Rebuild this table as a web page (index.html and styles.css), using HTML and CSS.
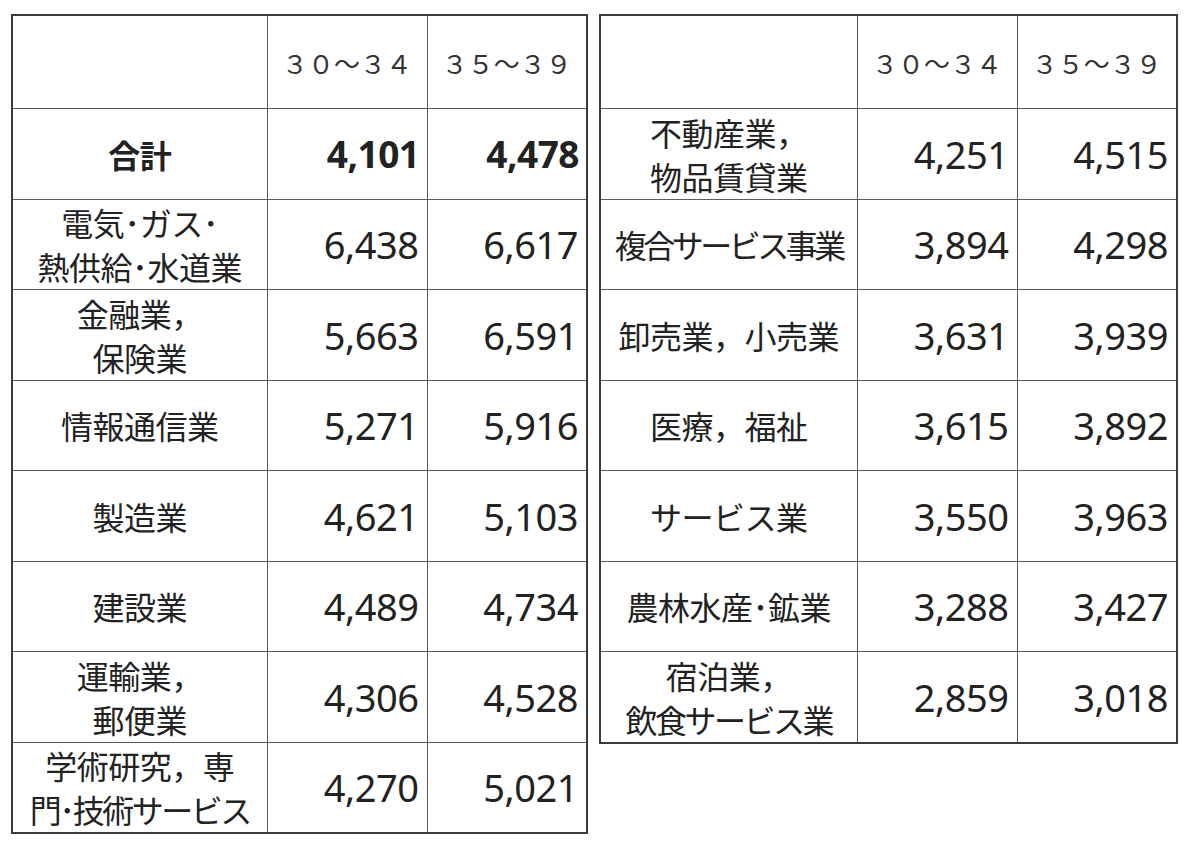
FILE: index.html
```html
<!DOCTYPE html>
<html lang="ja">
<head>
<meta charset="utf-8">
<title>年収表</title>
<link rel="stylesheet" href="styles.css">
</head>
<body>
<div class="wrap">
  <table class="tbl tbl-left">
    <colgroup><col class="c-lab-l"><col class="c-num"><col class="c-num"></colgroup>
    <tr class="head"><th></th><th>３０～３４</th><th>３５～３９</th></tr>
    <tr class="total"><td class="lab">合計</td><td class="num">4,101</td><td class="num">4,478</td></tr>
    <tr><td class="lab">電気･ガス･<br>熱供給･水道業</td><td class="num">6,438</td><td class="num">6,617</td></tr>
    <tr><td class="lab">金融業，<br>保険業</td><td class="num">5,663</td><td class="num">6,591</td></tr>
    <tr><td class="lab">情報通信業</td><td class="num">5,271</td><td class="num">5,916</td></tr>
    <tr><td class="lab">製造業</td><td class="num">4,621</td><td class="num">5,103</td></tr>
    <tr><td class="lab">建設業</td><td class="num">4,489</td><td class="num">4,734</td></tr>
    <tr><td class="lab">運輸業，<br>郵便業</td><td class="num">4,306</td><td class="num">4,528</td></tr>
    <tr><td class="lab">学術研究，専<br><span class="tight">門･技術サービス</span></td><td class="num">4,270</td><td class="num">5,021</td></tr>
  </table>
  <table class="tbl tbl-right">
    <colgroup><col class="c-lab-r"><col class="c-num"><col class="c-num"></colgroup>
    <tr class="head"><th></th><th>３０～３４</th><th>３５～３９</th></tr>
    <tr><td class="lab">不動産業，<br>物品賃貸業</td><td class="num">4,251</td><td class="num">4,515</td></tr>
    <tr><td class="lab"><span class="tighter">複合サービス事業</span></td><td class="num">3,894</td><td class="num">4,298</td></tr>
    <tr><td class="lab">卸売業，小売業</td><td class="num">3,631</td><td class="num">3,939</td></tr>
    <tr><td class="lab">医療，福祉</td><td class="num">3,615</td><td class="num">3,892</td></tr>
    <tr><td class="lab">サービス業</td><td class="num">3,550</td><td class="num">3,963</td></tr>
    <tr><td class="lab">農林水産･鉱業</td><td class="num">3,288</td><td class="num">3,427</td></tr>
    <tr><td class="lab">宿泊業，<br><span class="tight">飲食サービス業</span></td><td class="num">2,859</td><td class="num">3,018</td></tr>
  </table>
</div>
</body>
</html>
```

FILE: styles.css
```css
html, body {
  margin: 0;
  padding: 0;
  background: #ffffff;
}

body {
  font-family: "Noto Sans", "Noto Sans CJK JP", sans-serif;
  color: #222222;
}

.wrap {
  display: flex;
  align-items: flex-start;
  gap: 11px;
  padding: 14px 0 0 11px;
}

.tbl {
  border-collapse: collapse;
  border: 2px solid #3a3a3a;
  table-layout: fixed;
}

.tbl-left { width: 575px; }
.tbl-right { width: 577px; }

.c-lab-l { width: 255px; }
.c-lab-r { width: 257px; }
.c-num { width: 160px; }

.tbl th,
.tbl td {
  border: 1px solid #5a5a5a;
  padding: 0;
  height: 89.5px;
  overflow: hidden;
  white-space: nowrap;
}

.tbl .lab {
  text-align: center;
  font-family: "Noto Sans CJK JP", sans-serif;
  font-size: 32px;
  line-height: 44px;
  letter-spacing: -0.5px;
}

.tight { letter-spacing: -2.5px; }
.tighter { letter-spacing: -3.5px; }

.tbl .head th {
  height: 92px;
  font-family: "Noto Sans CJK JP", sans-serif;
  font-weight: 400;
  font-size: 26px;
  color: #333333;
  letter-spacing: 0;
  text-align: center;
}

.tbl .num {
  text-align: right;
  padding-right: 8px;
  font-size: 38px;
  letter-spacing: -0.5px;
}

.total td { font-weight: 700; }
.total .num { font-size: 37px; padding-right: 7px; }
```
